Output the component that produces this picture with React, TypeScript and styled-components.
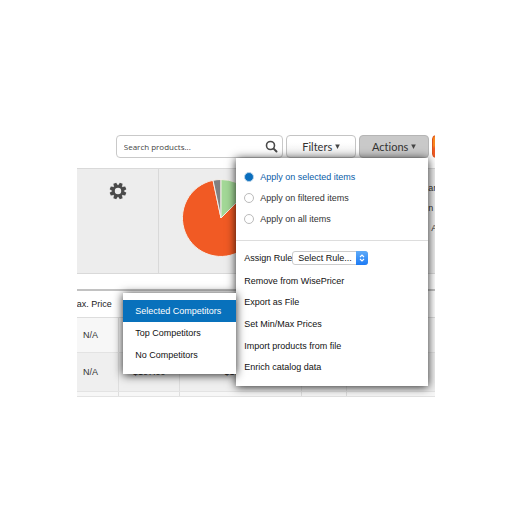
import React, { useState } from "react";
import styled, { createGlobalStyle } from "styled-components";

const GlobalStyle = createGlobalStyle`
  * { box-sizing: border-box; }
  body {
    margin: 0;
    background: #fff;
    color: #333;
    font-family: "Liberation Sans", Arial, sans-serif;
    font-size: 9px;
    line-height: 12px;
  }
  button, input, select { font: inherit; color: inherit; margin: 0; }
`;

const Page = styled.main`
  padding: 130px 15% 116px;
`;

const Screen = styled.div`
  overflow: hidden;
  position: relative;
`;

const Toolbar = styled.div`
  display: flex;
  gap: 3px;
  height: 38px;
  padding: 5px 0 10px 39px;
  font-family: Lato, sans-serif;
  font-variant-ligatures: none;
`;

const SearchBox = styled.label`
  flex: 1;
  min-width: 0;
  display: flex;
  align-items: center;
  padding: 0 4px 0 7px;
  border: 1px solid #c9c9c9;
  border-radius: 4px;
  background: #fff;
`;

const SearchInput = styled.input`
  flex: 1;
  min-width: 0;
  padding: 0;
  border: 0;
  outline: 0;
  background: transparent;
  font-family: "Open Sans", sans-serif;
  font-size: 8px;
  &::placeholder { color: #444; opacity: 1; }
`;

const ToolButton = styled.button<{ $active?: boolean }>`
  display: flex;
  align-items: center;
  justify-content: center;
  gap: 3px;
  width: 70px;
  height: 23px;
  padding: 0;
  border: 1px solid ${(p) => (p.$active ? "#b5b5b5" : "#c4c4c4")};
  border-radius: 4px;
  background: ${(p) => (p.$active ? "#c9c9c9" : "linear-gradient(#fff 30%, #ededed)")};
  color: #333;
  font-size: 11px;
  font-variant-ligatures: none;
`;

const AccentButton = styled.button`
  flex: none;
  width: 40px;
  margin-right: -37px;
  border: 1px solid #d9541e;
  border-radius: 4px;
  background: linear-gradient(#f9861c 45%, #f05a24 60%);
`;

const MenuAnchor = styled.div`
  position: relative;
  flex: none;
`;

const Popup = styled.div`
  position: absolute;
  z-index: 2;
  background: #fff;
  color: #111;
  font-family: "Liberation Sans", Arial, sans-serif;
  box-shadow: 0 1px 9px rgba(0, 0, 0, 0.85);
`;

const ActionsMenu = styled(Popup)`
  top: 100%;
  right: 1px;
  width: 192px;
  padding: 9px 0 8px;
`;

const Scope = styled.fieldset`
  display: grid;
  gap: 1px;
  margin: 0;
  padding: 0 8px 11px;
  border: 0;
  border-bottom: 1px solid #ddd;
`;

const ScopeOption = styled.label<{ $on: boolean }>`
  display: flex;
  align-items: center;
  gap: 6px;
  height: 20px;
  color: ${(p) => (p.$on ? "#0a5ca8" : "#333")};
`;

const Radio = styled.input`
  appearance: none;
  width: 10px;
  height: 10px;
  border: 1px solid #bbb;
  border-radius: 50%;
  background: #fff;
  &:checked {
    border-color: #b9d4ea;
    background: #0a6ebd;
  }
`;

const MenuBody = styled.div`
  padding: 5px 8px 0;
`;

const RuleRow = styled.div`
  display: flex;
  align-items: center;
  height: 24px;
`;

const SelectShell = styled.div`
  position: relative;
  display: flex;
  width: 76px;
`;

const RuleSelect = styled.select`
  appearance: none;
  width: 100%;
  height: 14px;
  padding: 0 12px 0 5px;
  border: 1px solid #ccc;
  border-radius: 3px;
  background: #fff;
  color: #111;
  line-height: 12px;
`;

const SelectCap = styled.span`
  position: absolute;
  inset: 0 0 0 auto;
  display: grid;
  place-items: center;
  width: 12px;
  border-radius: 0 3px 3px 0;
  background: linear-gradient(#5fabf8, #1d7bf5);
  pointer-events: none;
`;

const ActionList = styled.div`
  display: grid;
  grid-auto-rows: 1fr;
  height: 108px;
`;

const MenuItem = styled.button<{ $selected?: boolean }>`
  display: block;
  width: 100%;
  padding: 0;
  border: 0;
  background: transparent;
  text-align: left;
  white-space: nowrap;
`;

const Submenu = styled(Popup)`
  top: 135px;
  right: 100%;
  width: 113px;
  padding: 7px 0 8px;
`;

const SubmenuItem = styled(MenuItem)`
  height: 22px;
  padding: 0 12px;
  background: ${(p) => (p.$selected ? "#0871bc" : "transparent")};
  color: ${(p) => (p.$selected ? "#fff" : "#111")};
`;

const Summary = styled.section`
  display: grid;
  grid-template-columns: 82px minmax(0, 1fr) 7px;
  height: 106px;
  border: solid #d9d9d9;
  border-width: 1px 0;
  background: #ededed;
`;

const SettingsCell = styled.div`
  display: flex;
  justify-content: center;
  align-items: flex-start;
  padding: 13px 0 0 2px;
  border-right: 1px solid #d9d9d9;
`;

const IconButton = styled.button`
  display: flex;
  padding: 0;
  border: 0;
  background: none;
`;

const ChartCell = styled.div`
  padding: 10px 0 0 23px;
`;

const Legend = styled.div`
  padding-top: 9px;
  line-height: 20px;
  white-space: nowrap;
`;

const LegendLine = styled.div<{ $inset?: boolean }>`
  padding-left: ${(p) => (p.$inset ? "3px" : "0")};
`;

const PriceTable = styled.table`
  width: 100%;
  margin-top: 15px;
  border-collapse: collapse;
  border-top: 2px solid #c2c2c2;
  table-layout: fixed;
`;

const HeadCell = styled.th`
  height: 27px;
  padding: 0;
  border-bottom: 1px solid #ddd;
  color: #222;
  font-weight: 400;
  text-align: left;
  white-space: nowrap;
`;

const BodyRow = styled.tr<{ $shade: string; $h: number }>`
  height: ${(p) => p.$h}px;
  background: ${(p) => p.$shade};
`;

const Cell = styled.td`
  padding: 0;
  border-right: 1px solid #dedede;
  border-bottom: 1px solid #e3e3e3;
  color: #333;
  text-align: center;
  &:first-child { padding-right: 14px; }
  &:last-child { border-right: 0; }
`;

const rows = [
  { cells: ["N/A", "", "", "", ""], shade: "#f7f7f7", h: 35 },
  { cells: ["N/A", "$107.00", "$107.00", "", ""], shade: "#efefef", h: 39 },
  { cells: ["", "", "", "", ""], shade: "#f7f7f7", h: 5 },
];
const columns = [42, 61, 122, 45, 0];
const scopes = ["Apply on selected items", "Apply on filtered items", "Apply on all items"];
const actions = ["Remove from WisePricer", "Export as File", "Set Min/Max Prices", "Import products from file", "Enrich catalog data"];
const competitors = ["Selected Competitors", "Top Competitors", "No Competitors"];

const SearchIcon = () => (
  <svg width="13" height="13" viewBox="0 0 13 13" fill="none" stroke="#4a4a4a" aria-hidden="true">
    <circle cx="5.5" cy="5.5" r="4" strokeWidth="1.6" />
    <path d="M8.6 8.6 11.5 11.5" strokeWidth="2" strokeLinecap="round" />
  </svg>
);

const Caret = () => (
  <svg width="5" height="5" viewBox="0 0 5 5" aria-hidden="true">
    <path d="M0.2 0.5h4.6L2.5 5z" fill="#444" />
  </svg>
);

const GearIcon = () => (
  <svg width="18" height="18" viewBox="0 0 18 18" aria-hidden="true">
    <g fill="#4a4a4a">
      {[22.5, 67.5, 112.5, 157.5, 202.5, 247.5, 292.5, 337.5].map((a) => (
        <path key={a} d="M6.9 3.8 7.5 0.6H10.5L11.1 3.8z" transform={`rotate(${a} 9 9)`} />
      ))}
    </g>
    <circle cx="9" cy="9" r="4.6" fill="none" stroke="#4a4a4a" strokeWidth="2.8" />
  </svg>
);

const PieChart = () => (
  <svg width="78" height="78" viewBox="-39 -39 78 78" role="img" aria-label="Price position">
    <g stroke="#f4eee9" strokeWidth="1" strokeLinejoin="round">
      <path d="M0 0 27.2-27.2A38.5 38.5 0 1 1-8-37.7Z" fill="#f15a24" />
      <path d="M0 0-8-37.7A38.5 38.5 0 0 1 0-38.5Z" fill="#808080" />
      <path d="M0 0V-38.5A38.5 38.5 0 0 1 27.2-27.2Z" fill="#a3d897" />
    </g>
  </svg>
);

export default function App() {
  const [scope, setScope] = useState(0);
  const [picked, setPicked] = useState(0);
  return (
    <>
      <GlobalStyle />
      <Page>
        <Screen>
          <Toolbar>
            <SearchBox>
              <SearchInput type="text" placeholder="Search products..." aria-label="Search products" />
              <SearchIcon />
            </SearchBox>
            <ToolButton type="button">Filters <Caret /></ToolButton>
            <MenuAnchor>
              <ToolButton type="button" $active aria-expanded="true">Actions <Caret /></ToolButton>
              <ActionsMenu>
                <Scope aria-label="Apply on">
                  {scopes.map((label, i) => (
                    <ScopeOption key={label} $on={scope === i}>
                      <Radio type="radio" name="scope" checked={scope === i} onChange={() => setScope(i)} />
                      {label}
                    </ScopeOption>
                  ))}
                </Scope>
                <MenuBody>
                  <RuleRow>
                    <label htmlFor="rule">Assign Rule</label>
                    <SelectShell>
                      <RuleSelect id="rule"><option>Select Rule...</option></RuleSelect>
                      <SelectCap>
                        <svg width="6" height="8" viewBox="0 0 6 8" fill="none" stroke="#fff" strokeWidth="1.1" aria-hidden="true">
                          <path d="M1 3 3 1 5 3M1 5 3 7 5 5" />
                        </svg>
                      </SelectCap>
                    </SelectShell>
                  </RuleRow>
                  <ActionList>
                    {actions.map((label) => <MenuItem type="button" key={label}>{label}</MenuItem>)}
                  </ActionList>
                </MenuBody>
                <Submenu>
                  {competitors.map((label, i) => (
                    <SubmenuItem type="button" key={label} $selected={picked === i} onClick={() => setPicked(i)}>
                      {label}
                    </SubmenuItem>
                  ))}
                </Submenu>
              </ActionsMenu>
            </MenuAnchor>
            <AccentButton type="button" aria-label="More" />
          </Toolbar>
          <Summary>
            <SettingsCell>
              <IconButton type="button" aria-label="Settings"><GearIcon /></IconButton>
            </SettingsCell>
            <ChartCell><PieChart /></ChartCell>
            <Legend>
              <LegendLine>ar</LegendLine>
              <LegendLine>n</LegendLine>
              <LegendLine $inset>A</LegendLine>
            </Legend>
          </Summary>
          <PriceTable>
            <colgroup>
              {columns.map((w, i) => <col key={i} width={w || undefined} />)}
            </colgroup>
            <thead>
              <tr>
                <HeadCell>ax. Price</HeadCell>
                <HeadCell colSpan={4} />
              </tr>
            </thead>
            <tbody>
              {rows.map((row, r) => (
                <BodyRow key={r} $shade={row.shade} $h={row.h}>
                  {row.cells.map((text, c) => <Cell key={c}>{text}</Cell>)}
                </BodyRow>
              ))}
            </tbody>
          </PriceTable>
        </Screen>
      </Page>
    </>
  );
}
